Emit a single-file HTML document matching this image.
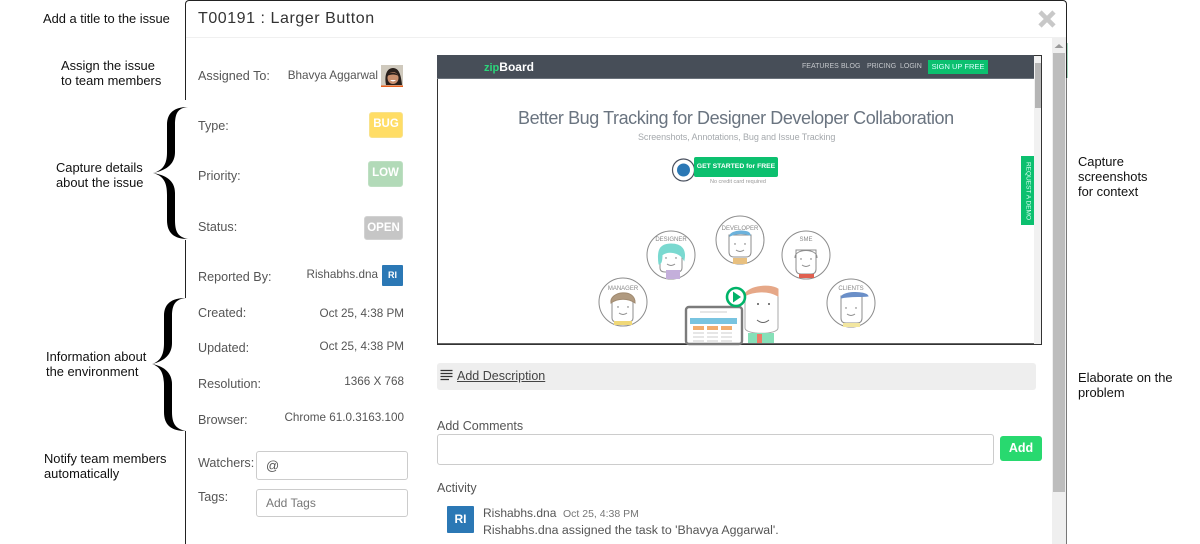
<!DOCTYPE html>
<html><head><meta charset="utf-8"><style>
html,body{margin:0;padding:0;background:#fff}
#p{position:relative;width:1200px;height:544px;overflow:hidden;background:#fff;font-family:"Liberation Sans",Arial,sans-serif;font-size:13px;color:#555}
#p div{position:absolute;white-space:nowrap}
.a{color:#111;font-size:12.9px;line-height:15px}
.l{left:198px;line-height:16px;font-size:12.6px}
.r{right:796px;line-height:16px;font-size:11.7px;text-align:right}
.b{color:#fff;font-weight:bold;font-size:11.5px;text-align:center;border-radius:3px;box-sizing:border-box}
.i{background:#fff;border:1px solid #ccc;border-radius:3px;box-sizing:border-box}
</style></head><body><div id="p">
<div class="a" style="left:43px;top:11px">Add a title to the issue</div>
<div class="a" style="left:61px;top:58px">Assign the issue<br>to team members</div>
<div class="a" style="left:56px;top:160px">Capture details<br>about the issue</div>
<div class="a" style="left:46px;top:349px">Information about<br>the environment</div>
<div class="a" style="left:44px;top:451px">Notify team members<br>automatically</div>
<div class="a" style="left:1078px;top:154px">Capture<br>screenshots<br>for context</div>
<div class="a" style="left:1078px;top:370px">Elaborate on the<br>problem</div>

<div style="left:185px;top:0;width:882px;height:560px;box-sizing:border-box;border:1px solid #222;border-bottom:0;border-radius:4px 4px 0 0;background:#fff"></div>
<div style="left:1066px;top:78px;width:1px;height:466px;background:#777"></div>
<div style="left:1067px;top:43px;width:1px;height:35px;background:#a8d8c0"></div>
<div style="left:186px;top:37px;width:880px;height:1px;background:#f0f0f0"></div>
<div style="left:198px;top:9px;font-size:16px;line-height:20px;letter-spacing:.55px;color:#333">T00191 : Larger Button</div>
<svg style="position:absolute;left:1037px;top:9px" width="20" height="20" viewBox="0 0 20 20"><path d="M3 3L17 17M17 3L3 17" stroke="#c8c8c8" stroke-width="4.6" fill="none"/></svg>

<div style="left:1052px;top:38px;width:14px;height:506px;background:#efefef"></div>
<div style="left:1053px;top:53px;width:12px;height:439px;background:#bdbdbd"></div>
<svg style="position:absolute;left:1054px;top:43px" width="10" height="6"><path d="M0.5 5L5 1L9.5 5Z" fill="#9a9a9a"/></svg>

<div class="l" style="top:68px">Assigned To:</div>
<div class="r" style="top:68px;right:822px">Bhavya Aggarwal</div>
<svg style="position:absolute;left:381px;top:65px" width="22" height="22" viewBox="0 0 22 22"><rect width="22" height="22" fill="#cfc9bd"/><path d="M5 20C3 10 6 3 12 3C18 3 20 10 21 20Z" fill="#2a201c"/><ellipse cx="12" cy="13" rx="5.5" ry="6" fill="#c98f6e"/><path d="M6 11C8 7 14 6 18 11C14 9 10 9 6 11Z" fill="#2a201c"/><path d="M9 15Q12 18 15 15Z" fill="#fff"/><rect y="20.5" width="22" height="1.5" fill="#e8601c"/></svg>

<div class="l" style="top:118px">Type:</div>
<div class="b" style="left:369px;top:112px;width:34px;height:26px;line-height:22px;background:#ffdd66;border:1px solid #f8e28c">BUG</div>
<div class="l" style="top:168px">Priority:</div>
<div class="b" style="left:368px;top:161px;width:35px;height:26px;line-height:22px;background:#b2dab8;border:1px solid #bedfc2">LOW</div>
<div class="l" style="top:219px">Status:</div>
<div class="b" style="left:364px;top:216px;width:39px;height:24px;line-height:22px;background:#c6c6c6;border:1px solid #d2d2d2">OPEN</div>
<div class="l" style="top:269px">Reported By:</div>
<div class="r" style="top:267px;right:822px">Rishabhs.dna</div>
<div class="b" style="left:382px;top:265px;width:21px;height:21px;line-height:21px;background:#2b78b5;font-size:9px;border-radius:1px">RI</div>
<div class="l" style="top:305px">Created:</div>
<div class="r" style="top:306px">Oct 25, 4:38 PM</div>
<div class="l" style="top:340px">Updated:</div>
<div class="r" style="top:339px">Oct 25, 4:38 PM</div>
<div class="l" style="top:376px">Resolution:</div>
<div class="r" style="top:374px">1366 X 768</div>
<div class="l" style="top:412px">Browser:</div>
<div class="r" style="top:410px">Chrome 61.0.3163.100</div>
<div class="l" style="top:455px">Watchers:</div>
<div class="i" style="left:256px;top:451px;width:152px;height:29px;line-height:28px;padding-left:9px;font-size:13px">@</div>
<div class="l" style="top:489px">Tags:</div>
<div class="i" style="left:256px;top:489px;width:152px;height:28px;line-height:27px;padding-left:9px;font-size:12px;color:#777">Add Tags</div>

<svg style="position:absolute;left:150px;top:100px" width="42" height="340" viewBox="150 100 42 340">
<rect x="150" y="100" width="42" height="140" fill="#fff"/>
<path d="M188 107C178 108 175 113 175 125L175 152C175 163 168 170 153 173C165 175 175 180 175 193L175 220C175 232 178 237 188 239C174 239 167 233 167 220L167 195C167 183 164 176 153 173C164 170 167 163 167 152L167 125C167 113 174 107 188 107Z" fill="#000"/>
<rect x="150" y="298" width="42" height="133" fill="#fff"/>
<path d="M186 298C176 299 172 304 172 316L172 343C172 354 165 361 152 364C163 366 172 372 172 384L172 412C172 424 176 429 186 431C171 431 164 425 164 412L164 386C164 374 161 367 152 364C161 361 164 354 164 343L164 316C164 304 171 298 186 298Z" fill="#000"/>
</svg>

<!-- screenshot -->
<div style="left:437px;top:55px;width:605px;height:290px;box-sizing:border-box;border:1px solid #333;background:#fff;overflow:hidden"></div>
<div style="left:437px;top:55px;width:597px;height:24px;background:#474e58;border-bottom:1px solid #6c737c;box-sizing:border-box"></div>
<div style="left:484px;top:59px;font-weight:bold;font-size:12px;line-height:16px;color:#fff"><span style="color:#2bd67b;font-size:11px">zip</span>Board</div>
<div style="left:802px;top:62px;font-size:7px;line-height:10px;color:#c5c8cc">FEATURES</div>
<div style="left:841px;top:62px;font-size:7px;line-height:10px;color:#c5c8cc">BLOG</div>
<div style="left:867px;top:62px;font-size:7px;line-height:10px;color:#c5c8cc">PRICING</div>
<div style="left:900px;top:62px;font-size:7px;line-height:10px;color:#c5c8cc">LOGIN</div>
<div style="left:928px;top:60px;width:60px;height:14px;background:#0cc06f;color:#dff;font-size:7.5px;line-height:14px;text-align:center">SIGN UP FREE</div>
<div style="left:1034px;top:56px;width:7px;height:288px;background:#f1f1f1"></div>
<div style="left:1035px;top:63px;width:6px;height:45px;background:#b5b5b5"></div>
<div style="left:518px;top:107px;font-size:18px;letter-spacing:-.42px;line-height:22px;color:#6a7480">Better Bug Tracking for Designer Developer Collaboration</div>
<div style="left:638px;top:131px;font-size:9px;letter-spacing:-.08px;line-height:12px;color:#a5a9ad">Screenshots, Annotations, Bug and Issue Tracking</div>
<svg style="position:absolute;left:671px;top:157px" width="26" height="26"><circle cx="12.5" cy="13" r="11" fill="#fff" stroke="#4b5260" stroke-width="1.2"/><circle cx="12.5" cy="13" r="6.5" fill="#2b78b5"/></svg>
<div style="left:694px;top:157px;width:84px;height:20px;background:#0cc06f;border-radius:2px;color:#fff;font-size:6.8px;font-weight:bold;line-height:19px;text-align:center">GET STARTED for FREE</div>
<div style="left:710px;top:179px;font-size:5.5px;line-height:7px;color:#999">No credit card required</div>
<div style="left:1021px;top:156px;width:13px;height:69px;background:#0cc06f"></div>
<div style="left:995px;top:186px;width:65px;height:10px;transform:rotate(90deg);font-size:6.5px;line-height:10px;text-align:center;color:#d8fff0">REQUEST A DEMO</div>

<div style="left:438px;top:343px;width:596px;height:1px;background:#666"></div>
<svg style="position:absolute;left:590px;top:200px" width="310" height="150" viewBox="590 200 310 150" fill="none" stroke="#8c8c8c" stroke-width="1">
<!-- manager -->
<circle cx="623" cy="302" r="24" fill="#fff"/>
<path d="M612 304C610 293 634 291 633 304V318Q633 322 628 322H617Q612 322 612 318Z" fill="#fff"/><path d="M611 303C609 291 636 288 635 303C628 298 618 298 611 303Z" fill="#b09a80" stroke="#a08a70"/><rect x="614" y="321" width="18" height="4" fill="#f0d878" stroke="none"/>
<text x="623" y="290" font-size="6" text-anchor="middle" fill="#888" stroke="none" font-family="Liberation Sans">MANAGER</text>
<path d="M619 313Q623 316 627 313"/><circle cx="618" cy="307" r=".7" fill="#666" stroke="none"/><circle cx="628" cy="307" r=".7" fill="#666" stroke="none"/>
<!-- designer -->
<circle cx="671" cy="255" r="24" fill="#fff"/>
<path d="M660 256C658 245 682 243 682 256V268Q682 272 677 272H665Q660 272 660 268Z" fill="#fff"/><path d="M659 264C657 250 660 244 671 244C682 244 686 250 684 260C680 252 668 250 662 255C662 260 661 264 659 264Z" fill="#7ad9d0" stroke="#7ad9d0"/><rect x="666" y="270" width="14" height="9" fill="#c4afdb" stroke="none"/>
<text x="671" y="241" font-size="6" text-anchor="middle" fill="#888" stroke="none" font-family="Liberation Sans">DESIGNER</text>
<path d="M667 264Q671 267 675 264"/><circle cx="666" cy="258" r=".7" fill="#666" stroke="none"/><circle cx="676" cy="258" r=".7" fill="#666" stroke="none"/>
<!-- developer -->
<circle cx="740" cy="240" r="24" fill="#fff"/>
<path d="M729 235H751V252Q751 257 746 257H734Q729 257 729 252Z" fill="#fff"/><path d="M730 236C730 230 750 229 750 235C744 233 736 233 730 236Z" fill="#6cb2dc" stroke="#6cb2dc"/><rect x="733" y="258" width="14" height="6" fill="#e8c080" stroke="none"/>
<text x="740" y="230" font-size="6" text-anchor="middle" fill="#888" stroke="none" font-family="Liberation Sans">DEVELOPER</text>
<path d="M736 250Q740 253 744 250"/><circle cx="735" cy="244" r=".7" fill="#666" stroke="none"/><circle cx="745" cy="244" r=".7" fill="#666" stroke="none"/>
<!-- sme -->
<circle cx="806" cy="255" r="24" fill="#fff"/>
<path d="M796 250H816V269Q816 274 811 274H801Q796 274 796 269Z" fill="#fff"/><path d="M795 258C794 248 818 248 817 258"/><rect x="799" y="274" width="15" height="4" fill="#e06050" stroke="none"/>
<text x="806" y="241" font-size="6" text-anchor="middle" fill="#888" stroke="none" font-family="Liberation Sans">SME</text>
<path d="M802 265Q806 268 810 265"/><circle cx="801" cy="259" r=".7" fill="#666" stroke="none"/><circle cx="811" cy="259" r=".7" fill="#666" stroke="none"/>
<!-- clients -->
<circle cx="851" cy="303" r="24" fill="#fff"/>
<path d="M841 296H862V318Q862 323 857 323H846Q841 323 841 318Z" fill="#fff"/><path d="M841 298C841 291 866 291 868 296C860 297 850 296 841 298Z" fill="#6a8fc8" stroke="#6a8fc8"/><rect x="843" y="323" width="17" height="4" fill="#f2e6a0" stroke="none"/>
<text x="851" y="290" font-size="6" text-anchor="middle" fill="#888" stroke="none" font-family="Liberation Sans">CLIENTS</text>
<path d="M847 314Q851 317 855 314"/><circle cx="846" cy="308" r=".7" fill="#666" stroke="none"/><circle cx="856" cy="308" r=".7" fill="#666" stroke="none"/>
<!-- big man -->
<path d="M745 296C745 286 778 284 778 296V328C778 335 745 335 745 328Z" fill="#fff" stroke="#aaa"/>
<path d="M744 296C746 287 768 283 778 289V296C768 290 754 291 744 296Z" fill="#e6a888" stroke="#e6a888"/>
<rect x="748" y="333" width="26" height="10" fill="#86e0b8" stroke="none"/><rect x="757" y="334" width="5" height="9" fill="#ef7a68" stroke="none"/>
<path d="M757 320Q763 325 769 320" stroke="#666"/><circle cx="758" cy="304" r="1" fill="#555" stroke="none"/><circle cx="769" cy="304" r="1" fill="#555" stroke="none"/>
<!-- laptop -->
<rect x="686" y="307" width="56" height="37" rx="3" fill="#fff" stroke="#7b7b7b" stroke-width="2.4"/>
<rect x="690" y="318" width="47" height="6" fill="#79c4e0" stroke="none"/>
<rect x="693" y="326" width="11" height="4" fill="#f2ad6e" stroke="none"/><rect x="707" y="326" width="11" height="4" fill="#f2ad6e" stroke="none"/><rect x="721" y="326" width="11" height="4" fill="#f2ad6e" stroke="none"/>
<path d="M693 333H704M707 333H718M721 333H732M693 337H704M707 337H718M721 337H732M693 341H704M707 341H718M721 341H732M700 312H727" stroke="#ccc"/>
<!-- play -->
<circle cx="736" cy="297" r="9" fill="#fff" stroke="#00b368" stroke-width="2.6"/><path d="M733 291.5L741 297L733 302.5Z" fill="#00b368" stroke="none"/>
</svg>

<div style="left:437px;top:363px;width:599px;height:27px;background:#eee;border-radius:3px"></div>
<svg style="position:absolute;left:440px;top:369px" width="14" height="12"><path d="M0.5 1.5H12.5M0.5 4.5H12.5M0.5 7.5H12.5M0.5 10.5H9" stroke="#333" stroke-width="1.2"/></svg>
<div style="left:457px;top:368px;line-height:16px;font-size:12.5px;text-decoration:underline;color:#444">Add Description</div>
<div style="left:437px;top:418px;line-height:16px;font-size:12.5px">Add Comments</div>
<div class="i" style="left:437px;top:434px;width:557px;height:31px"></div>
<div class="b" style="left:1000px;top:436px;width:42px;height:25px;line-height:24px;background:#28d96f;font-size:12.5px">Add</div>
<div style="left:437px;top:480px;line-height:16px;font-size:12.5px">Activity</div>
<div class="b" style="left:447px;top:506px;width:27px;height:27px;line-height:27px;background:#2b78b5;font-size:12px;border-radius:1px">RI</div>
<div style="left:483px;top:505px;line-height:16px;font-size:12px">Rishabhs.dna</div>
<div style="left:563px;top:506px;line-height:16px;font-size:10.5px;color:#777">Oct 25, 4:38 PM</div>
<div style="left:483px;top:522px;line-height:16px;font-size:12.35px">Rishabhs.dna assigned the task to 'Bhavya Aggarwal'.</div>
</div></body></html>
